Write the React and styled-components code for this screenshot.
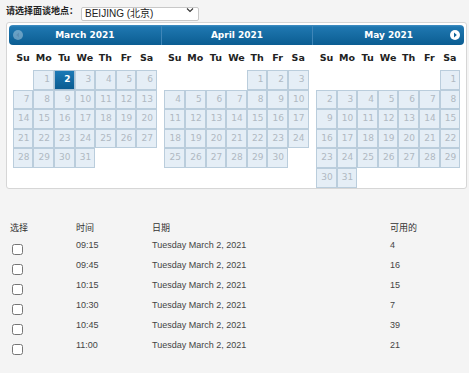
import React from 'react';
import styled, { createGlobalStyle, css } from 'styled-components';

const GlobalStyle = createGlobalStyle`
  body {
    margin: 0;
    background: #f4f4f4;
    font-family: "Liberation Sans", Arial, "Noto Sans CJK SC", sans-serif;
  }
`;

const Page = styled.div`
  width: 469px;
  height: 373px;
  overflow: hidden;
`;

const LocationRow = styled.div`
  display: flex;
  align-items: center;
  gap: 3px;
  padding: 3px 0 0 6px;
`;

const Label = styled.span`
  font-family: "Noto Sans CJK SC", sans-serif;
  font-size: 9px;
  font-weight: 700;
  color: #222;
`;

const SelectWrap = styled.div`
  position: relative;
  width: 118px;
  height: 14px;
`;

const Select = styled.select`
  appearance: none;
  width: 100%;
  height: 100%;
  box-sizing: border-box;
  margin: 0;
  padding: 0 0 0 3px;
  border: 1px solid #c8c8c8;
  border-radius: 2px;
  background: #fff;
  font-family: "Liberation Sans", "Noto Sans CJK SC", sans-serif;
  font-size: 10px;
  color: #222;
  line-height: 12px;
`;

const Chevron = styled.svg`
  position: absolute;
  right: 5px;
  top: 4px;
  pointer-events: none;
`;

const Datepicker = styled.div`
  display: flex;
  margin: 5px 0 0 6px;
  width: 461px;
  box-sizing: border-box;
  padding: 2px;
  background: #fff;
  border: 1px solid #d6d6d6;
  border-radius: 3px;
  height: 167px;
`;

const Group = styled.div`
  flex: 1;
  min-width: 0;
`;

const Header = styled.div`
  position: relative;
  height: 20px;
  display: flex;
  align-items: center;
  justify-content: center;
  background: linear-gradient(#4490c4 0, #1f77b0 2px, #0b5d92 100%);
  border-left: ${p => (p.$pos === 'first' ? 'none' : '1px solid #3f86b8')};
  ${p => p.$pos === 'first' && css`border-radius: 4px 0 0 4px;`}
  ${p => p.$pos === 'last' && css`border-radius: 0 4px 4px 0;`}
  color: #fff;
  font-family: "DejaVu Sans", Verdana, sans-serif;
  font-size: 9px;
  font-weight: 700;
`;

const NavButton = styled.span`
  position: absolute;
  top: 5px;
  ${p => (p.$side === 'prev' ? 'left: 4px;' : 'right: 4px;')}
  width: 10px;
  height: 10px;
  border-radius: 50%;
  background: ${p => (p.$disabled ? 'rgba(255,255,255,0.35)' : '#fff')};
  display: flex;
  align-items: center;
  justify-content: center;
`;

const MonthTable = styled.table`
  width: 95%;
  margin: 0 auto;
  border-collapse: separate;
  border-spacing: 0;
  table-layout: fixed;
  font-family: "DejaVu Sans", Verdana, sans-serif;
`;

const DayName = styled.th`
  height: 25px;
  padding: 0;
  font-size: 9.5px;
  font-weight: 700;
  color: #222;
  text-align: center;
`;

const Cell = styled.td`
  padding: 0;
`;

const Day = styled.span`
  display: block;
  box-sizing: border-box;
  height: 19.6px;
  line-height: 17.6px;
  padding-right: 3px;
  text-align: right;
  font-size: 9px;
  border: 1px solid #bacddc;
  background: #e5eef6;
  color: #b0b9c2;
  ${p => p.$active && css`
    background: linear-gradient(#1b79b6, #0b5c91);
    border-color: #a9c1d4;
    color: #fff;
    font-weight: 700;
  `}
`;

const Slots = styled.div`
  display: grid;
  grid-template-columns: 66px 76px 238px 1fr;
  grid-template-rows: 21px;
  grid-auto-rows: 20px;
  align-items: center;
  margin: 27px 0 0 10px;
  font-size: 9px;
  color: #444;
`;

const HeadCell = styled.div`
  font-family: "Noto Sans CJK SC", sans-serif;
  font-size: 9px;
  color: #333;
  padding-top: 1px;
`;

const Text = styled.div`
  padding-bottom: ${p => (p.$chk ? '0' : '4px')};
`;

const Check = styled.input`
  width: 11px;
  height: 11px;
  margin: 4px 0 0 2px;
  display: block;
`;

const DOW = ['Su', 'Mo', 'Tu', 'We', 'Th', 'Fr', 'Sa'];

const MONTHS = [
  { name: 'March 2021', start: 1, days: 31 },
  { name: 'April 2021', start: 4, days: 30 },
  { name: 'May 2021', start: 6, days: 31 },
];

const SLOTS = [
  ['09:15', 4],
  ['09:45', 16],
  ['10:15', 15],
  ['10:30', 7],
  ['10:45', 39],
  ['11:00', 21],
];

function weeks(start, days) {
  const cells = Array(start).fill(null);
  for (let d = 1; d <= days; d++) cells.push(d);
  const rows = [];
  for (let i = 0; i < cells.length; i += 7) rows.push(cells.slice(i, i + 7));
  return rows;
}

const Month = ({ month, pos }) => (
  <Group>
    <Header $pos={pos}>
      {pos === 'first' && (
        <NavButton $side="prev" $disabled>
          <svg width="6" height="6" viewBox="0 0 6 6">
            <path d="M4 0.5 L1.2 3 L4 5.5 Z" fill="#5d8fb4" />
          </svg>
        </NavButton>
      )}
      {month.name}
      {pos === 'last' && (
        <NavButton $side="next">
          <svg width="6" height="6" viewBox="0 0 6 6">
            <path d="M2 0.5 L4.8 3 L2 5.5 Z" fill="#0e6399" />
          </svg>
        </NavButton>
      )}
    </Header>
    <MonthTable>
      <thead>
        <tr>
          {DOW.map(d => <DayName key={d}>{d}</DayName>)}
        </tr>
      </thead>
      <tbody>
        {weeks(month.start, month.days).map((row, i) => (
          <tr key={i}>
            {row.map((d, j) => (
              <Cell key={j}>
                {d && <Day $active={month.name === 'March 2021' && d === 2}>{d}</Day>}
              </Cell>
            ))}
          </tr>
        ))}
      </tbody>
    </MonthTable>
  </Group>
);

export default function App() {
  return (
    <Page>
      <GlobalStyle />
      <LocationRow>
        <Label>请选择面谈地点：</Label>
        <SelectWrap>
          <Select defaultValue="BJ">
            <option value="BJ">BEIJING (北京)</option>
          </Select>
          <Chevron width="8" height="6" viewBox="0 0 8 6">
            <path d="M1 1.5 L4 4.5 L7 1.5" stroke="#333" strokeWidth="1.1" fill="none" />
          </Chevron>
        </SelectWrap>
      </LocationRow>
      <Datepicker>
        {MONTHS.map((m, i) => (
          <Month key={m.name} month={m} pos={i === 0 ? 'first' : i === 2 ? 'last' : 'mid'} />
        ))}
      </Datepicker>
      <Slots>
        <HeadCell>选择</HeadCell>
        <HeadCell>时间</HeadCell>
        <HeadCell>日期</HeadCell>
        <HeadCell>可用的</HeadCell>
        {SLOTS.map(([time, n]) => (
          <React.Fragment key={time}>
            <Text $chk><Check type="checkbox" /></Text>
            <Text>{time}</Text>
            <Text>Tuesday March 2, 2021</Text>
            <Text>{n}</Text>
          </React.Fragment>
        ))}
      </Slots>
    </Page>
  );
}
